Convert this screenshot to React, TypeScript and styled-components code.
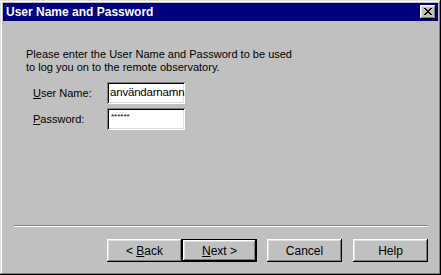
import React from "react";
import styled, { createGlobalStyle } from "styled-components";

const Global = createGlobalStyle`
  html, body { margin: 0; padding: 0; background: #c0c0c0; }
  body { font-family: "Liberation Sans", Arial, sans-serif; font-size: 11px; }
`;

const Window = styled.div`
  box-sizing: border-box;
  width: 441px;
  height: 275px;
  padding: 3px;
  background: #c0c0c0;
  box-shadow: inset -1px -1px #000, inset 1px 1px #dfdfdf, inset -2px -2px #808080, inset 2px 2px #fff;
  display: flex;
  flex-direction: column;
`;

const TitleBar = styled.div`
  height: 18px;
  background: #000080;
  display: flex;
  align-items: center;
  justify-content: space-between;
  padding: 0 2px 0 3px;
`;

const Title = styled.span`
  color: #fff;
  font-weight: bold;
  font-size: 12px;
`;

const CloseButton = styled.div`
  box-sizing: border-box;
  width: 16px;
  height: 14px;
  background: #c0c0c0;
  box-shadow: inset -1px -1px #000, inset 1px 1px #fff, inset -2px -2px #808080, inset 2px 2px #dfdfdf;
  display: flex;
  align-items: center;
  justify-content: center;
  padding: 0 0 1px 0;
`;

const Body = styled.div`
  flex: 1;
  display: flex;
  flex-direction: column;
  color: #000;
`;

const Intro = styled.p`
  margin: 27px 0 0 23px;
  line-height: 13px;
  font-size: 11px;
`;

const Form = styled.div`
  margin: 8px 0 0 30px;
  display: flex;
  flex-direction: column;
  gap: 4px;
`;

const Row = styled.div`
  display: flex;
  align-items: center;
`;

const Label = styled.span`
  width: 74px;
  line-height: 13px;
  padding-top: 1px;
`;

const Field = styled.div<{ $small?: boolean }>`
  box-sizing: border-box;
  width: 78px;
  height: 22px;
  background: #fff;
  box-shadow: inset 1px 1px #808080, inset -1px -1px #fff, inset 2px 2px #000, inset -2px -2px #dfdfdf;
  padding: ${(p) => (p.$small ? "4px 3px 0 4px" : "3px 0 0 3px")};
  font-size: ${(p) => (p.$small ? "8px" : "11.5px")};
  letter-spacing: ${(p) => (p.$small ? "0" : "-0.2px")};
  line-height: ${(p) => (p.$small ? "10px" : "15px")};
  white-space: nowrap;
  overflow: hidden;
`;

const Spacer = styled.div`
  flex: 1;
`;

const Separator = styled.div`
  margin: 0 10px 0 11px;
  height: 0;
  border-top: 1px solid #808080;
  border-bottom: 1px solid #fff;
`;

const ButtonRow = styled.div`
  display: flex;
  justify-content: flex-end;
  margin: 12px 10px 10px 0;
`;

const Button = styled.div<{ $default?: boolean; $gap?: number }>`
  box-sizing: border-box;
  width: 75px;
  height: 23px;
  margin-left: ${(p) => p.$gap ?? 0}px;
  background: #c0c0c0;
  display: flex;
  align-items: center;
  justify-content: center;
  font-size: 12px;
  white-space: pre;
  box-shadow: ${(p) =>
    p.$default
      ? "inset 0 0 0 1px #000, inset -2px -2px #000, inset 2px 2px #fff, inset -3px -3px #808080, inset 3px 3px #dfdfdf"
      : "inset -1px -1px #000, inset 1px 1px #fff, inset -2px -2px #808080, inset 2px 2px #dfdfdf"};
`;

export default function App() {
  return (
    <>
      <Global />
      <Window>
        <TitleBar>
          <Title>User Name and Password</Title>
          <CloseButton>
            <svg width="8" height="7" viewBox="0 0 8 7" shapeRendering="crispEdges">
              <path d="M0 0h2v1h-2z M6 0h2v1h-2z M1 1h2v1h-2z M5 1h2v1h-2z M2 2h4v1h-4z M3 3h2v1h-2z M2 4h4v1h-4z M1 5h2v1h-2z M5 5h2v1h-2z M0 6h2v1h-2z M6 6h2v1h-2z" fill="#000" />
            </svg>
          </CloseButton>
        </TitleBar>
        <Body>
          <Intro>
            Please enter the User Name and Password to be used
            <br />
            to log you on to the remote observatory.
          </Intro>
          <Form>
            <Row>
              <Label>
                <u>U</u>ser Name:
              </Label>
              <Field>användarnamn</Field>
            </Row>
            <Row>
              <Label>
                <u>P</u>assword:
              </Label>
              <Field $small>******</Field>
            </Row>
          </Form>
          <Spacer />
          <Separator />
          <ButtonRow>
            <Button>
              {"< "}
              <u>B</u>
              {"ack"}
            </Button>
            <Button $default>
              <u>N</u>
              {"ext >"}
            </Button>
            <Button $gap={10}>Cancel</Button>
            <Button $gap={11}>Help</Button>
          </ButtonRow>
        </Body>
      </Window>
    </>
  );
}
